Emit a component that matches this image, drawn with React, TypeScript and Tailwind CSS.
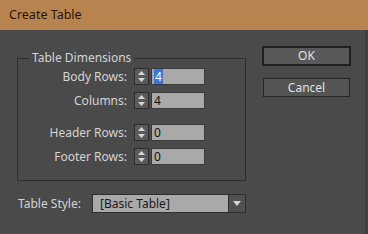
import React from "react";

function Spinner() {
  return (
    <div className="flex h-[17px] w-[15px] flex-col items-center justify-center gap-[3px] border border-[#2c2c2c] bg-[#5b5b5b]">
      <svg width="7" height="4" viewBox="0 0 7 4">
        <path d="M0 4 L3.5 0 L7 4 Z" fill="#d6d6d6" />
      </svg>
      <svg width="7" height="4" viewBox="0 0 7 4">
        <path d="M0 0 L3.5 4 L7 0 Z" fill="#d6d6d6" />
      </svg>
    </div>
  );
}

function NumberRow({ label, value, selected }: { label: string; value: string; selected?: boolean }) {
  return (
    <div className="flex h-[17px] items-center">
      <span className="w-[116px] pr-[7px] text-right text-[#d4d4d4]">{label}</span>
      <Spinner />
      <div className="ml-[2px] flex h-[17px] w-[54px] items-center border border-[#3a3a3a] bg-[#a9a9a9] pl-[2px] text-[#111]">
        {selected ? <span className="bg-[#3a78d6] px-[1px] leading-[15px] text-white">{value}</span> : <span>{value}</span>}
      </div>
    </div>
  );
}

export default function App() {
  return (
    <div
      className="flex h-[234px] w-[368px] flex-col overflow-hidden bg-[#4a4a4a] text-[12px]"
      style={{ fontFamily: '"Noto Sans", "Open Sans", sans-serif' }}
    >
      <div className="flex h-[30px] items-center bg-[#b7844f] pl-[9px] text-[12.5px] text-[#2a1408]">Create Table</div>
      <div className="flex flex-1 border-r-[3px] border-[#3f3f3f]">
        <div className="ml-[17px] flex w-[229px] flex-col">
          <fieldset className="mt-[20px] h-[131px] border border-[#2e2e2e]">
            <legend className="ml-[11px] px-[3px] leading-[16px] text-[#d4d4d4]">Table Dimensions</legend>
            <div className="mt-[2px] flex flex-col">
              <NumberRow label="Body Rows:" value="4" selected />
              <div className="mt-[7px]">
                <NumberRow label="Columns:" value="4" />
              </div>
              <div className="mt-[15px]">
                <NumberRow label="Header Rows:" value="0" />
              </div>
              <div className="mt-[7px]">
                <NumberRow label="Footer Rows:" value="0" />
              </div>
            </div>
          </fieldset>
          <div className="mt-[13px] flex h-[19px] items-center">
            <span className="w-[75px] pl-[1px] text-[#d4d4d4]">Table Style:</span>
            <div className="flex h-[19px] flex-1 border border-[#2e2e2e]">
              <div className="flex flex-1 items-center bg-[#a9a9a9] pl-[7px] text-[#1a1a1a]">[Basic Table]</div>
              <div className="flex w-[17px] items-center justify-center border-l border-[#2e2e2e] bg-[#505050]">
                <svg width="8" height="5" viewBox="0 0 8 5">
                  <path d="M0 0 L4 5 L8 0 Z" fill="#d6d6d6" />
                </svg>
              </div>
            </div>
          </div>
        </div>
        <div className="ml-[16px] mt-[16px] flex flex-col">
          <button className="flex h-[20px] w-[89px] items-center justify-center border-2 border-[#202020] bg-[#595959] text-[#e2e2e2]">
            OK
          </button>
          <button className="ml-[1px] mt-[12px] flex h-[19px] w-[87px] items-center justify-center border border-[#252525] bg-[#545454] text-[#e2e2e2]">
            Cancel
          </button>
        </div>
      </div>
    </div>
  );
}
